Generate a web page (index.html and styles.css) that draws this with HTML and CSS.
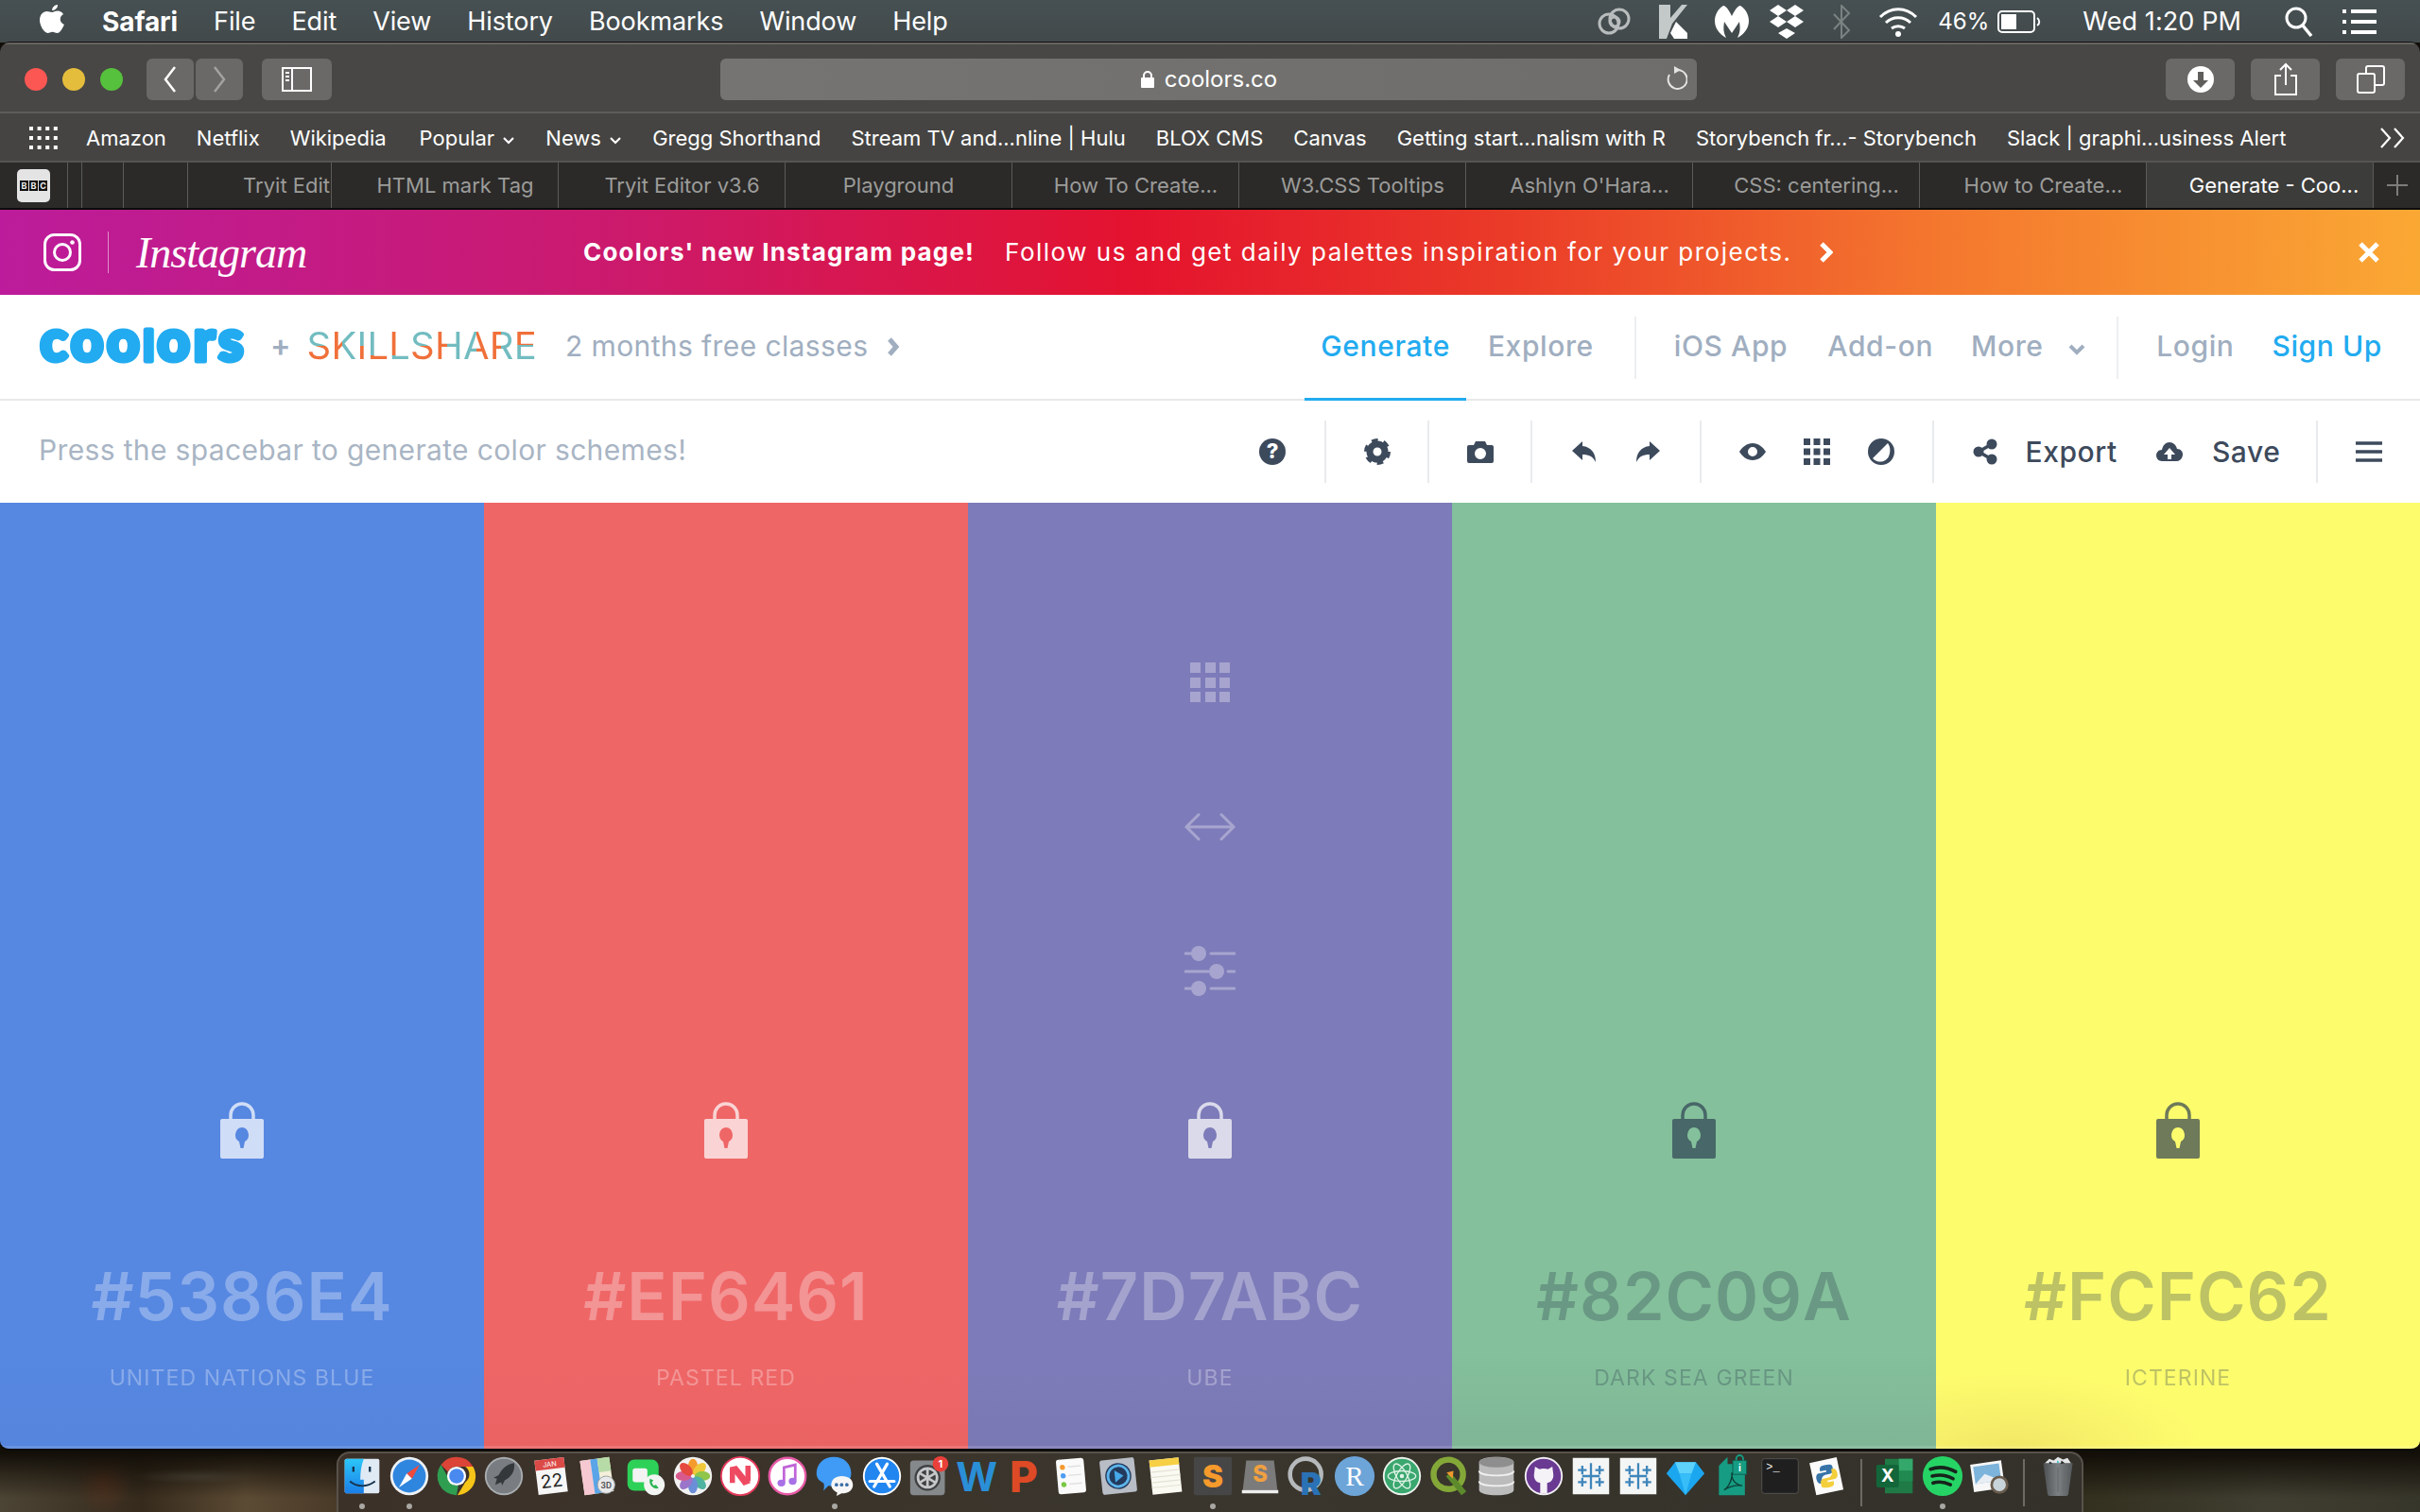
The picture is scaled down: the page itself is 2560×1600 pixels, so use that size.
FILE: index.html
```html
<!DOCTYPE html>
<html lang="en">
<head>
  <meta charset="UTF-8">
  <title>Generate - Coolors</title>
  <link rel="stylesheet" href="styles.css">
</head>
<body>
  <svg class="defs" width="0" height="0">
    <linearGradient id="finderBlue" x1="0" y1="0" x2="0" y2="1"><stop offset="0" stop-color="#2cc6f8"/><stop offset="1" stop-color="#1a7ee8"/></linearGradient>
    <linearGradient id="trashBody" x1="0" y1="0" x2="1" y2="0"><stop offset="0" stop-color="#4c4f51"/><stop offset=".5" stop-color="#7c8083"/><stop offset="1" stop-color="#55585a"/></linearGradient>
    <symbol id="lock" viewBox="0 0 46 60">
      <path d="M11 19V14a12 12 0 0 1 24 0v5" fill="none" stroke="currentColor" stroke-width="3.5"/>
      <path fill-rule="evenodd" fill="currentColor" d="M2 18h42a2 2 0 0 1 2 2v38a2 2 0 0 1-2 2H2a2 2 0 0 1-2-2V20a2 2 0 0 1 2-2zM23 27a7.500 8 0 0 0-3 15l1.500 7h3l1.500-7a7.500 8 0 0 0-3-15z"/>
    </symbol>
    <symbol id="tableau" viewBox="0 0 48 48">
      <rect x="3" y="3" width="42" height="42" fill="#f4f5f5"/>
      <path d="M24 9v30M14 24h20M14 12v10M9 17h10M34 12v10M29 17h10M14 26v10M9 31h10M34 26v10M29 31h10" stroke="#3f86bb" stroke-width="2.500"/>
    </symbol>
  </svg>

  <!-- MENU BAR -->
  <div class="menubar">
    <svg class="apple" viewBox="0 0 28 32"><path fill="#fff" d="M20 1c.300 3-2.600 6.300-5.800 6 -.400-3 2.800-6 5.800-6zM14 9c1.500 0 3-1.400 6-1.400 2.500 0 4.800 1.300 6 3.400-4.800 2.800-4 9 .900 11-1.600 4-4.400 9-7.400 9-1.900 0-2.700-1.300-5-1.300s-3.200 1.300-5 1.300C5.500 31 1 23 1 17.300 1 11.500 4.700 8 8.400 8c2.400 0 4 1 5.600 1z"/></svg>
    <div class="menu-items">
      <span class="menu-app">Safari</span>
      <span>File</span>
      <span>Edit</span>
      <span>View</span>
      <span>History</span>
      <span>Bookmarks</span>
      <span>Window</span>
      <span>Help</span>
    </div>
    <div class="status-items">
      <svg class="st st-cc" viewBox="0 0 40 32"><g fill="none" stroke="#b8bcbc" stroke-width="3"><circle cx="14" cy="18" r="10"/><circle cx="25" cy="13" r="10"/><circle cx="20" cy="16" r="5"/></g></svg>
      <svg class="st st-k" viewBox="0 0 32 36"><path fill="#c3c8c8" d="M0 0h12v14L24 0h6L14 20 8 36H0z"/><path fill="#fff" d="M18 18l12 12v6H16l-4-6z"/></svg>
      <svg class="st st-m" viewBox="0 0 38 36"><path fill="#fff" d="M10 1c3 0 6 5 9 11 3-6 6-11 9-11 5 3 9 9 9 16 0 8-5 14-12 18 3-6 3-10 2-17l-8 12-8-12c-1 7-1 11 2 17C6 31 1 25 1 17 1 10 5 4 10 1z"/></svg>
      <svg class="st st-d" viewBox="0 0 38 36"><path fill="#fff" d="M10 0l9 6-9 6-9-6zM28 0l9 6-9 6-9-6zM10 12l9 6-9 6-9-6zM28 12l9 6-9 6-9-6zM19 25l9 5-9 6-9-6z"/></svg>
      <svg class="st st-b" viewBox="0 0 20 36"><path fill="none" stroke="#7b8282" stroke-width="2" d="M2 10l16 17-8 8V1l8 8L2 26"/></svg>
      <svg class="st st-w" viewBox="0 0 42 32"><g fill="none" stroke="#fff" stroke-width="3"><path d="M2 11c11-11 27-11 38 0"/><path d="M8 17c7-7 19-7 26 0"/><path d="M14 23c4-3 10-3 14 0"/></g><circle cx="21" cy="29" r="3" fill="#fff"/></svg>
      <span class="st-pct">46%</span>
      <svg class="st st-bat" viewBox="0 0 46 24"><rect x="1" y="1" width="38" height="22" rx="4" fill="none" stroke="#fff" stroke-width="2"/><rect x="4" y="4" width="16" height="16" fill="#fff"/><path d="M42 8c3 2 3 6 0 8" fill="none" stroke="#fff" stroke-width="2"/></svg>
      <span class="st-time">Wed 1:20 PM</span>
      <svg class="st st-s" viewBox="0 0 30 32"><circle cx="12" cy="12" r="10" fill="none" stroke="#fff" stroke-width="3"/><path d="M19 20l9 11" stroke="#fff" stroke-width="3.500"/></svg>
      <svg class="st st-l" viewBox="0 0 36 28"><path stroke="#fff" stroke-width="4" d="M0 3h4M9 3h27M0 14h4M9 14h27M0 25h4M9 25h27"/></svg>
    </div>
  </div>

  <div class="window">
    <!-- SAFARI TOOLBAR -->
    <div class="safari-bar">
      <div class="lights">
        <i class="light light-red"></i>
        <i class="light light-yellow"></i>
        <i class="light light-green"></i>
      </div>
      <div class="nav-btns">
        <div class="sbtn sbtn-nav"><svg viewBox="0 0 20 32" width="20" height="32"><path d="M15 3L5 16l10 13" fill="none" stroke="#fff" stroke-width="2.500"/></svg></div>
        <div class="sbtn sbtn-nav"><svg viewBox="0 0 20 32" width="20" height="32"><path d="M5 3l10 13L5 29" fill="none" stroke="#a3a2a0" stroke-width="2.500"/></svg></div>
      </div>
      <div class="sbtn sbtn-side"><svg viewBox="0 0 32 26" width="32" height="26"><rect x="1" y="1" width="30" height="24" fill="none" stroke="#fff" stroke-width="2"/><path d="M11 1v24" stroke="#fff" stroke-width="2"/><path d="M4 6h4M4 10h4M4 14h4" stroke="#fff" stroke-width="2"/></svg></div>
      <div class="url-bar">
        <svg viewBox="0 0 16 20" width="16" height="20"><path d="M4 9V6a4 4 0 0 1 8 0v3" fill="none" stroke="#fff" stroke-width="2"/><rect x="1" y="8" width="14" height="11" rx="1" fill="#fff"/></svg>
        <span>coolors.co</span>
        <svg class="reload" viewBox="0 0 24 26" width="24" height="26"><path d="M14 4a10 10 0 1 1-9 5" fill="none" stroke="#e3e3e2" stroke-width="2"/><path d="M10 0l7 4-7 4z" fill="#e3e3e2"/></svg>
      </div>
      <div class="bar-actions">
        <div class="sbtn sbtn-act"><svg viewBox="0 0 28 28" width="28" height="28"><circle cx="14" cy="14" r="14" fill="#fff"/><path d="M11 6h6v9h5l-8 8-8-8h5z" fill="#5f5e5c"/></svg></div>
        <div class="sbtn sbtn-act"><svg viewBox="0 0 26 36" width="26" height="36"><path d="M8 14H2v20h22V14h-6M13 24V2M7 8l6-6 6 6" fill="none" stroke="#fff" stroke-width="2"/></svg></div>
        <div class="sbtn sbtn-act"><svg viewBox="0 0 30 30" width="30" height="30"><rect x="1" y="9" width="18" height="20" rx="2" fill="none" stroke="#fff" stroke-width="2"/><path d="M10 9V3a2 2 0 0 1 2-2h15a2 2 0 0 1 2 2v16a2 2 0 0 1-2 2h-8" fill="none" stroke="#fff" stroke-width="2"/></svg></div>
      </div>
    </div>

    <!-- BOOKMARKS -->
    <div class="bookmarks">
      <svg class="bm-grid" viewBox="0 0 30 24" width="30" height="24"><path stroke="#fff" stroke-width="4" stroke-dasharray="4 4.600" d="M0 2h30M0 12h30M0 22h30"/></svg>
      <span class="bm bm-amazon">Amazon</span>
      <span class="bm">Netflix</span>
      <span class="bm">Wikipedia</span>
      <span class="bm bm-pop">Popular <svg viewBox="0 0 14 10" width="14" height="10"><path d="M2 2l5 5 5-5" fill="none" stroke="#fff" stroke-width="2.200"/></svg></span>
      <span class="bm">News <svg viewBox="0 0 14 10" width="14" height="10"><path d="M2 2l5 5 5-5" fill="none" stroke="#fff" stroke-width="2.200"/></svg></span>
      <span class="bm">Gregg Shorthand</span>
      <span class="bm">Stream TV and...nline | Hulu</span>
      <span class="bm">BLOX CMS</span>
      <span class="bm">Canvas</span>
      <span class="bm">Getting start...nalism with R</span>
      <span class="bm">Storybench fr...- Storybench</span>
      <span class="bm">Slack | graphi...usiness Alert</span>
      <svg class="bm-more" viewBox="0 0 28 22" width="28" height="22"><path d="M2 1l9 10-9 10M16 1l9 10-9 10" fill="none" stroke="#fff" stroke-width="2.200"/></svg>
    </div>

    <!-- TABS -->
    <div class="tabs">
      <div class="tab tab-pin tab-bbc"><span class="bbc"><b>B</b><b>B</b><b>C</b></span></div>
      <div class="tab tab-pin tab-p1"></div>
      <div class="tab tab-pin tab-p2"></div>
      <div class="tab tab-pin tab-p3"></div>
      <div class="tab tab-cut">Tryit Edit</div>
      <div class="tab tab-long">HTML mark Tag</div>
      <div class="tab tab-long">Tryit Editor v3.6</div>
      <div class="tab">Playground</div>
      <div class="tab tab-long">How To Create...</div>
      <div class="tab tab-long">W3.CSS Tooltips</div>
      <div class="tab tab-long">Ashlyn O'Hara...</div>
      <div class="tab tab-long">CSS: centering...</div>
      <div class="tab tab-long">How to Create...</div>
      <div class="tab tab-active">Generate - Coo...</div>
      <div class="tab-add"><svg viewBox="0 0 24 24" width="24" height="24"><path d="M12 1v22M1 12h22" stroke="#7d7d7b" stroke-width="2"/></svg></div>
    </div>

    <!-- INSTAGRAM BANNER -->
    <div class="banner">
      <svg class="ig-icon" viewBox="0 0 40 40" width="40" height="40"><rect x="1.500" y="1.500" width="37" height="37" rx="10" fill="none" stroke="#fff" stroke-width="3"/><circle cx="20" cy="20" r="8.500" fill="none" stroke="#fff" stroke-width="3"/><circle cx="30.500" cy="9.500" r="2.300" fill="#fff"/></svg>
      <i class="ig-line"></i>
      <span class="ig-word">Instagram</span>
      <b class="banner-strong">Coolors' new Instagram page!</b>
      <span class="banner-text">Follow us and get daily palettes inspiration for your projects.</span>
      <svg class="banner-arrow" viewBox="0 0 16 24" width="16" height="24"><path d="M4 3l9 9-9 9" fill="none" stroke="#fff" stroke-width="5"/></svg>
      <svg class="banner-close" viewBox="0 0 24 24" width="24" height="24"><path d="M3 3l18 18M21 3L3 21" stroke="#fff" stroke-width="5"/></svg>
    </div>

    <!-- COOLORS NAV -->
    <div class="topnav">
      <svg class="brand" viewBox="0 0 220 44" width="220" height="44"><text x="2.500" y="37" textLength="215" class="brand-text">coo<tspan class="brand-l">l</tspan>ors</text></svg>
      <span class="brand-plus">+</span>
      <div class="skill"><span class="sk-v">S</span><span class="sk-l">K</span><span class="sk-v">I</span><span class="sk-fo">L</span><span class="sk-ft">L</span><span class="sk-v">S</span><span class="sk-l">H</span><span class="sk-r">A</span><span class="sk-l">R</span><span class="sk-e">E</span></div>
      <span class="promo">2 months free classes</span>
      <svg class="promo-arrow" viewBox="0 0 14 20" width="14" height="20"><path d="M3 2l7 8-7 8" fill="none" stroke="#a0aec0" stroke-width="5"/></svg>
      <div class="links">
        <a class="link link-on">Generate</a>
        <a class="link">Explore</a>
        <i class="link-sep link-sep-a"></i>
        <a class="link">iOS App</a>
        <a class="link link-wide">Add-on</a>
        <a class="link">More <svg viewBox="0 0 20 14" width="20" height="14"><path d="M3 3l7 7 7-7" fill="none" stroke="#a0aec0" stroke-width="4"/></svg></a>
        <i class="link-sep link-sep-b"></i>
        <a class="link">Login</a>
        <a class="link link-blue">Sign Up</a>
      </div>
    </div>

    <!-- TOOLBAR -->
    <div class="toolbar">
      <span class="hint">Press the spacebar to generate color schemes!</span>
      <div class="tgroup tg-help">
        <svg class="ti" viewBox="0 0 28 28"><circle cx="14" cy="14" r="14" fill="#3d4a5c"/><text x="14" y="21" text-anchor="middle" class="ti-q">?</text></svg>
      </div>
      <div class="tgroup tg-one">
        <svg class="ti" viewBox="0 0 28 28"><circle cx="14" cy="14" r="8" fill="none" stroke="#3d4a5c" stroke-width="7"/><circle cx="14" cy="14" r="12" fill="none" stroke="#3d4a5c" stroke-width="4" stroke-dasharray="6.500 6.070"/></svg>
      </div>
      <div class="tgroup tg-one">
        <svg class="ti" viewBox="0 0 28 28"><path fill-rule="evenodd" fill="#3d4a5c" d="M9 3h10l2 4h5a2 2 0 0 1 2 2v15a2 2 0 0 1-2 2H2a2 2 0 0 1-2-2V9a2 2 0 0 1 2-2h5zM14 10a6 6 0 1 0 0 12 6 6 0 0 0 0-12z"/></svg>
      </div>
      <div class="tgroup tg-hist">
        <svg class="ti" viewBox="0 0 28 28"><path fill="#3d4a5c" d="M12 3L1 13l11 10v-6c7 0 11 2 14 8 0-10-5-16-14-17z"/></svg>
        <svg class="ti" viewBox="0 0 28 28"><path fill="#3d4a5c" d="M16 3l11 10-11 10v-6c-7 0-11 2-14 8 0-10 5-16 14-17z"/></svg>
      </div>
      <div class="tgroup tg-view">
        <svg class="ti" viewBox="0 0 28 28"><path fill-rule="evenodd" fill="#3d4a5c" d="M14 5c6 0 11 4 14 9-3 5-8 9-14 9S3 19 0 14c3-5 8-9 14-9zm0 4a5 5 0 1 0 0 10 5 5 0 0 0 0-10z"/></svg>
        <svg class="ti" viewBox="0 0 28 28"><path fill="#3d4a5c" d="M0 0h7v7H0zM10.500 0h7v7h-7zM21 0h7v7h-7zM0 10.500h7v7H0zM10.500 10.500h7v7h-7zM21 10.500h7v7h-7zM0 21h7v7H0zM10.500 21h7v7h-7zM21 21h7v7h-7z"/></svg>
        <svg class="ti" viewBox="0 0 28 28"><path fill-rule="evenodd" fill="#3d4a5c" d="M14 0a14 14 0 1 1 0 28 14 14 0 0 1 0-28zm7 5L5 21c6 6 14 4 17-2 2-5 2-10-1-14z"/></svg>
      </div>
      <div class="tgroup tg-file">
        <svg class="ti" viewBox="0 0 28 28"><path d="M21 6L7 14l14 8" fill="none" stroke="#3d4a5c" stroke-width="3.500"/><circle cx="21" cy="6" r="5.500" fill="#3d4a5c"/><circle cx="7" cy="14" r="5.500" fill="#3d4a5c"/><circle cx="21" cy="22" r="5.500" fill="#3d4a5c"/></svg>
        <span class="tlabel tl-export">Export</span>
        <svg class="ti" viewBox="0 0 28 28"><path fill-rule="evenodd" fill="#3d4a5c" d="M14 4c4 0 7 3 8 7 4 0 6 3 6 6s-2.500 7-6 7H6c-3.500 0-6-3-6-6s2-6 6-6c1-5 4-8 8-8zm0 6l-6 7h4v5h4v-5h4z"/></svg>
        <span class="tlabel tl-save">Save</span>
      </div>
      <div class="tgroup tg-one">
        <svg class="ti" viewBox="0 0 28 28"><path d="M0 5h28M0 14h28M0 23h28" stroke="#3d4a5c" stroke-width="3.500"/></svg>
      </div>
    </div>

    <!-- PALETTE -->
    <div class="palette">
      <div class="swatch sw-blue">
        <svg class="lock"><use href="#lock"/></svg>
        <div class="hex">#5386E4</div>
        <div class="cname">UNITED NATIONS BLUE</div>
      </div>
      <div class="swatch sw-red">
        <svg class="lock"><use href="#lock"/></svg>
        <div class="hex">#EF6461</div>
        <div class="cname">PASTEL RED</div>
      </div>
      <div class="swatch sw-ube">
        <div class="tools">
          <svg class="tool-grid" viewBox="0 0 42 42"><path fill="#fff" d="M0 0h11v11H0zM16 0h11v11H16zM31 0h11v11H31zM0 16h11v11H0zM16 16h11v11H16zM31 16h11v11H31zM0 31h11v11H0zM16 31h11v11H16zM31 31h11v11H31z"/></svg>
          <svg class="tool-move" viewBox="0 0 56 30"><path d="M3 15h50M16 2L3 15l13 13M40 2l13 13-13 13" fill="none" stroke="#fff" stroke-width="3" stroke-linecap="round"/></svg>
          <svg class="tool-adj" viewBox="0 0 54 54"><path d="M1 8h7M28 8h25M1 27h24M46 27h7M1 45h7M28 45h25" stroke="#fff" stroke-width="3" stroke-linecap="round"/><g fill="#fff"><circle cx="15" cy="8" r="8"/><circle cx="34" cy="27" r="8"/><circle cx="15" cy="45" r="8"/></g></svg>
        </div>
        <svg class="lock"><use href="#lock"/></svg>
        <div class="hex">#7D7ABC</div>
        <div class="cname">UBE</div>
      </div>
      <div class="swatch swatch-dark sw-green">
        <svg class="lock"><use href="#lock"/></svg>
        <div class="hex">#82C09A</div>
        <div class="cname">DARK SEA GREEN</div>
      </div>
      <div class="swatch swatch-dark sw-yellow">
        <svg class="lock"><use href="#lock"/></svg>
        <div class="hex">#FCFC62</div>
        <div class="cname">ICTERINE</div>
      </div>
    </div>
  </div>

  <!-- DOCK -->
  <div class="dock">
    <div class="dk on"><svg viewBox="0 0 48 48"><rect x="4" y="4" width="40" height="40" rx="2" fill="#dfeaf5"/><path d="M4 6a2 2 0 0 1 2-2h20c-3 8-4 15-4 24h4v16H6a2 2 0 0 1-2-2z" fill="url(#finderBlue)"/><path d="M14 13v6M33 13v6" stroke="#16324c" stroke-width="2.500"/><path d="M10 30c8 7 20 7 29 0" fill="none" stroke="#16324c" stroke-width="2"/></svg></div>
    <div class="dk on"><svg viewBox="0 0 48 48"><circle cx="24" cy="24" r="22" fill="#eef2f5"/><circle cx="24" cy="24" r="19" fill="#2f86df"/><path d="M36 11L21 21l6 6z" fill="#f04a3c"/><path d="M12 37l15-10-6-6z" fill="#fff"/></svg></div>
    <div class="dk"><svg viewBox="0 0 48 48"><path d="M24 2a22 22 0 0 1 19 11H24a11 11 0 0 0-10 6L6 11A22 22 0 0 1 24 2z" fill="#db4437"/><path d="M43 13a22 22 0 0 1-18 33l9-15a11 11 0 0 0 0-18z" fill="#f5c518"/><path d="M6 11l9 16a11 11 0 0 0 11 8l-2 11A22 22 0 0 1 6 11z" fill="#2f9e51"/><circle cx="24" cy="24" r="11" fill="#fff"/><circle cx="24" cy="24" r="8.500" fill="#4a8af0"/></svg></div>
    <div class="dk"><svg viewBox="0 0 48 48"><circle cx="24" cy="24" r="22" fill="#a9adb0"/><circle cx="24" cy="24" r="20" fill="#797d81"/><path d="M36 9c-8 1-14 6-18 14l-6 3 4 1-2 7 7-3 1 4 3-6c8-4 12-11 11-20z" fill="#35383b"/></svg></div>
    <div class="dk"><svg viewBox="0 0 48 48"><g transform="rotate(-7 24 24)"><rect x="7" y="4" width="34" height="40" fill="#f6f6f6"/><path d="M7 4h34v12H7z" fill="#dc4a48"/><text x="24" y="13" text-anchor="middle" class="dk-jan">JAN</text><text x="24" y="37" text-anchor="middle" class="dk-day">22</text></g></svg></div>
    <div class="dk"><svg viewBox="0 0 48 48"><g transform="rotate(-8 22 22)"><rect x="5" y="4" width="34" height="40" fill="#f3efd9"/><path d="M5 4h12v40H5z" fill="#f6c8d2"/><path d="M17 4h8v40h-8z" fill="#5aa4e8"/><path d="M25 4h14v16H25z" fill="#b6dba6"/></g><circle cx="33" cy="34" r="10" fill="#e8e9ea" stroke="#9a9c9e"/><text x="33" y="38" text-anchor="middle" class="dk-3d">3D</text></svg></div>
    <div class="dk"><svg viewBox="0 0 48 48"><rect x="3" y="5" width="36" height="36" rx="8" fill="#2ed158"/><rect x="9" y="15" width="17" height="16" rx="3" fill="#f3f3f3"/><circle cx="34" cy="34" r="12" fill="#f2f4f2"/><path d="M29 27c-2 7 4 13 10 11l-3-4-3 1-2-4 2-2z" fill="#2cb552"/></svg></div>
    <div class="dk"><svg viewBox="0 0 48 48"><circle cx="24" cy="24" r="22" fill="#f1f1f1"/><g transform="translate(24 24)"><ellipse cy="-11" rx="5.500" ry="9" fill="#f49b2d"/><ellipse cy="-11" rx="5.500" ry="9" fill="#efc93b" transform="rotate(45)"/><ellipse cy="-11" rx="5.500" ry="9" fill="#8ec54a" transform="rotate(90)"/><ellipse cy="-11" rx="5.500" ry="9" fill="#4fb3a1" transform="rotate(135)"/><ellipse cy="-11" rx="5.500" ry="9" fill="#6b8ed8" transform="rotate(180)"/><ellipse cy="-11" rx="5.500" ry="9" fill="#9a75c9" transform="rotate(225)"/><ellipse cy="-11" rx="5.500" ry="9" fill="#d85a8d" transform="rotate(270)"/><ellipse cy="-11" rx="5.500" ry="9" fill="#e5493f" transform="rotate(315)"/></g></svg></div>
    <div class="dk"><svg viewBox="0 0 48 48"><circle cx="24" cy="24" r="22" fill="#fff" stroke="#e5395a" stroke-width="2"/><path d="M12 14l8-2 16 20-8 3z" fill="#ee4a62"/><path d="M12 14h6v18h-6zM30 12h6v18h-6z" fill="#ee4a62"/></svg></div>
    <div class="dk"><svg viewBox="0 0 48 48"><circle cx="24" cy="24" r="21" fill="#fff" stroke="#e85aa7" stroke-width="2.500"/><path d="M20 31V14l13-3v18" fill="none" stroke="#c165d9" stroke-width="3"/><ellipse cx="17" cy="32" rx="4.500" ry="4" fill="#a870e6"/><ellipse cx="30" cy="30" rx="4.500" ry="4" fill="#a870e6"/></svg></div>
    <div class="dk on"><svg viewBox="0 0 48 48"><path d="M23 2c12 0 20 8 20 19 0 9-8 15-18 15-3 0-6 0-8-1l-6 6c1-4 1-7 0-9C5 29 3 25 3 21 3 10 11 2 23 2z" fill="#3f9bf5"/><path d="M32 24c8 0 13 4 13 10s-5 10-13 10l-6 3 1-4c-4-2-7-5-7-9 0-6 5-10 12-10z" fill="#f6f6f6"/><circle cx="26" cy="34" r="2" fill="#3a6ea8"/><circle cx="32" cy="34" r="2" fill="#3a6ea8"/><circle cx="38" cy="34" r="2" fill="#3a6ea8"/></svg></div>
    <div class="dk"><svg viewBox="0 0 48 48"><circle cx="24" cy="24" r="22" fill="#fff"/><circle cx="24" cy="24" r="20" fill="#2286f1"/><path d="M30 10L15 36M18 10l15 26M10 30h28" stroke="#fff" stroke-width="3.500" stroke-linecap="round"/></svg></div>
    <div class="dk"><svg viewBox="0 0 48 48"><rect x="2" y="6" width="40" height="40" rx="4" fill="#86898c"/><circle cx="22" cy="26" r="15" fill="#3e4042"/><circle cx="22" cy="26" r="11" fill="none" stroke="#c5c7c9" stroke-width="3"/><path d="M22 15v22M12 20l20 12M32 20L12 32" stroke="#c5c7c9" stroke-width="3"/><circle cx="37" cy="10" r="9" fill="#e9403a"/><text x="37" y="14" text-anchor="middle" class="dk-badge">1</text></svg></div>
    <div class="dk"><svg viewBox="0 0 48 48"><text x="24" y="41" text-anchor="middle" class="dk-word">W</text></svg></div>
    <div class="dk"><svg viewBox="0 0 48 48"><text x="24" y="42" text-anchor="middle" class="dk-ppt">P</text></svg></div>
    <div class="dk"><svg viewBox="0 0 48 48"><g transform="rotate(-5 24 24)"><rect x="8" y="4" width="32" height="40" rx="3" fill="#fafafa"/><circle cx="15" cy="13" r="3" fill="#f59a2f"/><circle cx="15" cy="23" r="3" fill="#4e9df2"/><circle cx="15" cy="33" r="3" fill="#79c944"/><path d="M21 13h15M21 23h15M21 33h15" stroke="#e0e0e0" stroke-width="1.500"/></g></svg></div>
    <div class="dk"><svg viewBox="0 0 48 48"><g transform="rotate(-6 24 24)"><rect x="4" y="4" width="40" height="40" rx="3" fill="#b8bdc6"/><circle cx="24" cy="24" r="15" fill="#233a5c"/><circle cx="24" cy="24" r="12" fill="none" stroke="#5db4ea" stroke-width="3"/><path d="M20 17l10 7-10 7z" fill="#45a8ea"/></g></svg></div>
    <div class="dk"><svg viewBox="0 0 48 48"><g transform="rotate(-6 24 24)"><rect x="7" y="4" width="34" height="40" fill="#fafaf2"/><path d="M7 4h34v8H7z" fill="#f6cf45"/><path d="M7 18h34M7 24h34M7 30h34M7 36h34" stroke="#e4e2d4" stroke-width="1.200"/></g></svg></div>
    <div class="dk on"><svg viewBox="0 0 48 48"><rect x="2" y="2" width="44" height="44" rx="2" fill="#464646"/><text x="24" y="37" text-anchor="middle" class="dk-subl">S</text></svg></div>
    <div class="dk"><svg viewBox="0 0 48 48"><path d="M8 6h32l4 34H4z" fill="#7b7b7b"/><path d="M3 40h42v4H3z" fill="#eee"/><text x="24" y="31" text-anchor="middle" class="dk-merge">S</text></svg></div>
    <div class="dk"><svg viewBox="0 0 48 48"><circle cx="22" cy="22" r="18" fill="none" stroke="#b6b9bc" stroke-width="5"/><text x="28" y="46" text-anchor="middle" class="dk-rs">R</text></svg></div>
    <div class="dk"><svg viewBox="0 0 48 48"><ellipse cx="24" cy="24" rx="23" ry="23" fill="#6da5d9"/><text x="24" y="35" text-anchor="middle" class="dk-r">R</text></svg></div>
    <div class="dk"><svg viewBox="0 0 48 48"><circle cx="24" cy="24" r="22" fill="#eef3ee"/><circle cx="24" cy="24" r="20" fill="#3aa76f"/><g fill="none" stroke="#dff3e6" stroke-width="1.500"><ellipse cx="24" cy="24" rx="16" ry="6"/><ellipse cx="24" cy="24" rx="16" ry="6" transform="rotate(60 24 24)"/><ellipse cx="24" cy="24" rx="16" ry="6" transform="rotate(120 24 24)"/></g><circle cx="24" cy="24" r="2.500" fill="#dff3e6"/></svg></div>
    <div class="dk"><svg viewBox="0 0 48 48"><circle cx="23" cy="22" r="17" fill="none" stroke="#84a838" stroke-width="7"/><path d="M23 22l18 22" stroke="#5d8a2c" stroke-width="7"/><path d="M21 20l8-2-1 9z" fill="#ef9a2c"/></svg></div>
    <div class="dk"><svg viewBox="0 0 48 48"><path d="M4 8c0-8 40-8 40 0v32c0 8-40 8-40 0z" fill="#bcbcbc"/><ellipse cx="24" cy="8" rx="20" ry="6" fill="#8e8e8e"/><path d="M4 18c0 7 40 7 40 0M4 30c0 7 40 7 40 0" fill="none" stroke="#f0f0f0" stroke-width="2"/></svg></div>
    <div class="dk"><svg viewBox="0 0 48 48"><circle cx="24" cy="24" r="22" fill="#f2eff5"/><circle cx="24" cy="24" r="20" fill="#6a3a92"/><path d="M14 13l5 3c3-1 7-1 10 0l5-3 1 8c1 6-2 10-7 11v12h-8V32c-5-1-8-5-7-11z" fill="#f4f1f7"/></svg></div>
    <div class="dk"><svg viewBox="0 0 48 48"><use href="#tableau"/></svg></div>
    <div class="dk"><svg viewBox="0 0 48 48"><use href="#tableau"/></svg></div>
    <div class="dk"><svg viewBox="0 0 48 48"><path d="M12 8h24l10 13-22 25L2 21z" fill="#1ba7f0"/><path d="M12 8h24l-5 13H17z" fill="#5ed2fb"/><path d="M17 21h14l-7 25z" fill="#37bdf8"/></svg></div>
    <div class="dk"><svg viewBox="0 0 48 48"><path d="M8 12L18 2v8h20v36H8z" fill="#169c82"/><rect x="24" y="6" width="16" height="16" fill="#169c82" stroke="#0f5c4f"/><path d="M28 6V4a4 4 0 0 1 8 0v2" fill="none" stroke="#169c82" stroke-width="2"/><text x="32" y="18" text-anchor="middle" class="dk-i">i</text><path d="M14 40c6-4 10-14 9-20-1 8 4 14 12 15-8-1-15 1-21 5z" fill="none" stroke="#0e3f38" stroke-width="1.500"/></svg></div>
    <div class="dk"><svg viewBox="0 0 48 48"><rect x="3" y="4" width="42" height="40" rx="3" fill="#1f1f1f" stroke="#555"/><text x="8" y="17" class="dk-term">&gt;_</text></svg></div>
    <div class="dk"><svg viewBox="0 0 48 48"><g transform="rotate(-12 24 24)"><rect x="7" y="5" width="32" height="38" fill="#fbfbfb"/><path d="M23 11c-6 0-6 3-6 6h7v2h-9c-3 0-4 3-4 6 0 3 1 6 4 6h2v-4c0-3 3-5 6-5h5c2 0 4-2 4-4v-4c0-2-3-3-9-3z" fill="#3874a8"/><path d="M24 37c6 0 6-3 6-6h-7v-2h9c3 0 4-3 4-6s-1-6-4-6h-2v4c0 3-3 5-6 5h-5c-2 0-4 2-4 4v4c0 2 3 3 9 3z" fill="#f4cf3c"/></g></svg></div>
    <i class="dk-sep"></i>
    <div class="dk"><svg viewBox="0 0 48 48"><path d="M12 4h32v40H12z" fill="#1f7a45"/><path d="M28 4h16v14H28z" fill="#34a86a"/><path d="M28 18h16v12H28z" fill="#218a50"/><rect x="2" y="11" width="26" height="26" rx="2" fill="#13663a"/><text x="15" y="31" text-anchor="middle" class="dk-x">X</text></svg></div>
    <div class="dk on"><svg viewBox="0 0 48 48"><circle cx="24" cy="24" r="23" fill="#26d465"/><path d="M10 16c9-3 20-2 29 3M12 24c8-2 17-1 24 3M13 32c6-2 14-1 20 2" fill="none" stroke="#17241c" stroke-width="4" stroke-linecap="round"/></svg></div>
    <div class="dk"><svg viewBox="0 0 48 48"><g transform="rotate(-8 22 22)"><rect x="3" y="8" width="36" height="32" fill="#f7f7f7"/><rect x="6" y="11" width="30" height="20" fill="#7db4dc"/><path d="M6 31l12-10 18 10z" fill="#e8eef3"/></g><circle cx="35" cy="34" r="9" fill="#c9d3da" stroke="#6b5d4e" stroke-width="3"/></svg></div>
    <i class="dk-sep"></i>
    <div class="dk"><svg viewBox="0 0 48 48"><path d="M7 9h34l-5 36a3 3 0 0 1-3 2H15a3 3 0 0 1-3-2z" fill="url(#trashBody)"/><path d="M16 14l2 28M24 14v28M32 14l-2 28" stroke="#6a6d6f" stroke-width="1.500"/><path d="M9 9l5-5 5 2 5-4 6 3 5-2 4 6z" fill="#e4e6e8"/><path d="M14 7l4 2-4 1zM28 6l4 3-5 1z" fill="#2b2d30"/><path d="M23 6l3 2-3 1z" fill="#38c4d0"/></svg></div>
  </div>
</body>
</html>
```

FILE: styles.css
```css
body {
  margin: 0;
  width: 2560px;
  height: 1600px;
  overflow: hidden;
  display: flex;
  flex-direction: column;
  background:
    linear-gradient(#120e08 1537px, rgba(18, 14, 8, 0) 1585px),
    radial-gradient(ellipse 30px 40px at 110px 1565px, rgba(90, 50, 30, .7), transparent),
    radial-gradient(ellipse 70px 8px at 210px 1562px, rgba(110, 105, 90, .6), transparent),
    linear-gradient(90deg, #4c4434 0, #352a1c 150px, #5c4b34 260px, #493a28 358px, #33301f 2204px, #3f3e30 2400px, #37362a 2560px);
  font-family: 'Inter', 'Liberation Sans', sans-serif;
}

.defs {
  position: absolute;
}

/* menu bar */
.menubar {
  height: 45px;
  flex-shrink: 0;
  display: flex;
  align-items: center;
  background: linear-gradient(#465052, #42494b);
  color: #fff;
  font-size: 27px;
  box-sizing: border-box;
}

.apple {
  width: 28px;
  height: 32px;
  margin-left: 41px;
  margin-top: -6px;
}

.menu-items {
  display: flex;
  gap: 38px;
  margin-left: 39px;
  letter-spacing: -0.1px;
}

.menu-app {
  font-weight: 700;
  font-size: 28px;
}

.status-items {
  margin-left: auto;
  display: flex;
  align-items: center;
  height: 100%;
}

.st {
  flex-shrink: 0;
}

.st-cc { width: 40px; height: 32px; margin-right: 27px; }
.st-k { width: 32px; height: 36px; margin-right: 26px; }
.st-m { width: 38px; height: 36px; margin-right: 20px; }
.st-d { width: 38px; height: 36px; margin-right: 29px; }
.st-b { width: 20px; height: 36px; margin-right: 29px; }
.st-w { width: 42px; height: 32px; margin-right: 21px; }
.st-pct { font-size: 24px; margin-right: 9px; }
.st-bat { width: 46px; height: 24px; margin-right: 44px; }
.st-time { font-size: 27px; margin-right: 46px; letter-spacing: 0.1px; }
.st-s { width: 30px; height: 32px; margin-right: 31px; }
.st-l { width: 36px; height: 28px; margin-right: 46px; }

/* safari */
.window {
  height: 1490px;
  flex-shrink: 0;
  display: flex;
  flex-direction: column;
  overflow: hidden;
  border-radius: 10px;
  border-bottom: 2px solid #0b0b0b;
  box-sizing: border-box;
  box-shadow: 0 -1px 0 #111;
}

.safari-bar {
  height: 75px;
  flex-shrink: 0;
  display: flex;
  align-items: center;
  background: #484745;
  border-top: 2px solid #66645f;
  border-bottom: 2px solid #5d5c5a;
  padding-top: 2px;
  box-sizing: border-box;
}

.lights {
  display: flex;
  gap: 16px;
  margin-left: 26px;
}

.light {
  width: 24px;
  height: 24px;
  border-radius: 50%;
}

.light-red { background: #fc5753; }
.light-yellow { background: #e5bd3c; }
.light-green { background: #56c13c; }

.sbtn {
  height: 44px;
  background: #6a6967;
  border-radius: 6px;
  display: flex;
  align-items: center;
  justify-content: center;
}

.nav-btns {
  display: flex;
  gap: 2px;
  margin-left: 25px;
}

.sbtn-nav { width: 50px; }
.sbtn-side { width: 74px; margin-left: 20px; }

.url-bar {
  position: relative;
  width: 1033px;
  height: 44px;
  margin-left: 411px;
  border-radius: 6px;
  background: linear-gradient(90deg, #757472, #6e6d6b);
  display: flex;
  align-items: center;
  justify-content: center;
  gap: 10px;
  color: #fff;
  font-size: 24px;
}

.reload {
  position: absolute;
  right: 10px;
  top: 8px;
}

.bar-actions {
  display: flex;
  gap: 17px;
  margin-left: auto;
  margin-right: 16px;
}

.sbtn-act { width: 73px; }

/* bookmarks */
.bookmarks {
  height: 48px;
  padding-top: 2px;
  flex-shrink: 0;
  display: flex;
  align-items: center;
  gap: 32px;
  background: #454442;
  border-bottom: 2px solid #555452;
  color: #fff;
  font-size: 22px;
  white-space: nowrap;
}

.bm-grid {
  margin-left: 31px;
  flex-shrink: 0;
}

.bm {
  flex-shrink: 0;
}

.bm svg {
  margin-left: 2px;
}

.bm-amazon { margin-left: -2px; }
.bm-pop { margin-left: 3px; }

.bm-more {
  margin-left: auto;
  margin-right: 15px;
}

/* tabs */
.tabs {
  height: 48px;
  flex-shrink: 0;
  display: flex;
  background: #2b2a29;
  border-bottom: 2px solid #0c0c0c;
  color: #9c9c9a;
  font-size: 22px;
  white-space: nowrap;
}

.tab {
  width: 240px;
  flex-shrink: 0;
  box-sizing: border-box;
  border-right: 1px solid #5b5b59;
  display: flex;
  align-items: center;
  justify-content: center;
  overflow: hidden;
}

.tab-long { padding-left: 22px; }
.tab-pin { justify-content: flex-start; }
.tab-bbc { width: 72px; padding-left: 18px; }
.tab-p1 { width: 15px; }
.tab-p2 { width: 44px; }
.tab-p3 { width: 68px; }

.tab-cut {
  width: 152px;
  justify-content: flex-end;
  padding-right: 1px;
}

.tab-active {
  padding-left: 30px;
  background: #3c3c3a;
  color: #fff;
}

.tab-add {
  flex: 1;
  display: flex;
  align-items: center;
  justify-content: center;
}

.bbc {
  width: 35px;
  height: 35px;
  background: #e4e4e4;
  border-radius: 5px;
  display: flex;
  align-items: center;
  justify-content: center;
  gap: 1px;
}

.bbc b {
  width: 9px;
  height: 11px;
  background: #111;
  color: #eee;
  font-size: 9px;
  line-height: 11px;
  text-align: center;
}

/* instagram */
.banner {
  height: 90px;
  flex-shrink: 0;
  display: flex;
  align-items: center;
  background: linear-gradient(90deg, #bc1c9b 0, #cb1a6e 25%, #e4132e 47%, #ea3a28 62%, #f4772e 80%, #faa834 100%);
  color: #fff;
  font-size: 26px;
  white-space: nowrap;
}

.ig-icon {
  margin-left: 46px;
  flex-shrink: 0;
}

.ig-line {
  width: 1px;
  height: 44px;
  margin-left: 28px;
  background: rgba(255, 255, 255, .5);
}

.ig-word {
  margin-left: 29px;
  width: 180px;
  font-family: 'Liberation Serif', serif;
  font-style: italic;
  font-size: 46px;
  letter-spacing: -1px;
}

.banner-strong {
  margin-left: 293px;
  margin-bottom: 2px;
  font-weight: 700;
  letter-spacing: 1.2px;
}

.banner-text {
  margin-left: 32px;
  margin-bottom: 2px;
  letter-spacing: 1.5px;
}

.banner-arrow {
  margin-left: 28px;
}

.banner-close {
  margin-left: auto;
  margin-right: 42px;
}

/* coolors nav */
.topnav {
  height: 112px;
  flex-shrink: 0;
  display: flex;
  align-items: center;
  background: #fff;
  border-bottom: 2px solid #e9e9e9;
  box-sizing: border-box;
  padding-left: 40px;
}

.brand {
  flex-shrink: 0;
  overflow: visible;
}

.brand-text {
  font-family: 'Lato', 'Inter', sans-serif;
  font-weight: 900;
  font-size: 60px;
  fill: #22abf0;
  stroke: #22abf0;
  stroke-width: 5px;
  stroke-linejoin: round;
}

.brand-l {
  font-size: 44px;
}

.brand-plus {
  margin-left: 26px;
  margin-bottom: 3px;
  color: #a0aec0;
  font-size: 32px;
  font-weight: 600;
}

.skill {
  margin-left: 17px;
  margin-bottom: 3px;
  font-size: 40px;
  letter-spacing: 0.2px;
}

.skill span {
  display: inline-block;
  -webkit-background-clip: text;
  background-clip: text;
  color: transparent;
}

.sk-v { background-image: linear-gradient(#72bcc0 52%, #f0703a 52%); }
.sk-l { background-image: linear-gradient(90deg, #f0703a 45%, #72bcc0 45%); }
.sk-r { background-image: linear-gradient(90deg, #72bcc0 50%, #f0703a 50%); }
.sk-fo { background-image: linear-gradient(#72bcc0 72%, #f0703a 72%); }
.sk-ft { background-image: linear-gradient(#f0703a 72%, #72bcc0 72%); }
.sk-e { background-image: linear-gradient(#f0703a 50%, #72bcc0 50%); }

.promo {
  margin-left: 30px;
  margin-bottom: 2px;
  color: #a0aec0;
  font-size: 30px;
  letter-spacing: 0.4px;
}

.promo-arrow {
  margin-left: 20px;
}

.links {
  margin-left: auto;
  display: flex;
  align-items: center;
  align-self: stretch;
  padding-right: 40px;
  margin-bottom: -2px;
  font-size: 30px;
  font-weight: 500;
  letter-spacing: 0.6px;
  color: #a0aec0;
}

.link {
  margin-left: 40px;
  margin-bottom: 5px;
  white-space: nowrap;
}

.link-wide {
  margin-left: 42px;
}

.link svg {
  margin-left: 17px;
}

.link-on {
  align-self: stretch;
  display: flex;
  align-items: center;
  padding: 0 17px 2px;
  margin: 0 -17px 0 0;
  color: #22abf0;
  border-bottom: 3px solid #22abf0;
  box-sizing: border-box;
}

.link-blue {
  color: #22abf0;
}

.link-sep {
  width: 2px;
  height: 66px;
  background: #eceff2;
}

.link-sep-a { margin-left: 43px; }
.link-sep-b { margin-left: 32px; }

/* toolbar */
.toolbar {
  height: 108px;
  flex-shrink: 0;
  display: flex;
  align-items: center;
  background: #fff;
  padding: 0 1px 0 41px;
}

.hint {
  margin-right: auto;
  margin-bottom: 5px;
  color: #a9b5c4;
  font-size: 30px;
  letter-spacing: 0.35px;
}

.tgroup {
  height: 66px;
  box-sizing: border-box;
  display: flex;
  align-items: center;
  justify-content: center;
  border-left: 2px solid #e8ebee;
}

.tg-help { width: 110px; border-left: 0; }
.tg-one { width: 109px; }
.tg-hist { width: 179px; gap: 39px; }
.tg-view { width: 246px; gap: 40px; }
.tg-file { width: 406px; padding-left: 3px; }

.ti {
  width: 28px;
  height: 28px;
  flex-shrink: 0;
}

.ti-q {
  font-size: 22px;
  font-weight: 800;
  fill: #fff;
}

.tlabel {
  color: #3d4a5c;
  font-size: 30px;
  font-weight: 500;
  letter-spacing: 0.6px;
}

.tl-export { margin-left: 28px; margin-right: 41px; }
.tl-save { margin-left: 31px; }

/* palette */
.palette {
  flex: 1;
  display: flex;
  min-height: 0;
}

.swatch {
  flex: 1;
  display: flex;
  flex-direction: column;
  align-items: center;
  justify-content: flex-end;
  padding-bottom: 63px;
  color: #fff;
  box-shadow: inset 0 -3px 0 rgba(255, 255, 255, .12);
}

.swatch-dark {
  color: #2c3e50;
}

.sw-blue { background: linear-gradient(#5687e1 90%, #5585dc); }
.sw-red { background: linear-gradient(#ef6667 90%, #ea6363); }
.sw-ube { background: linear-gradient(#7d7bb9 90%, #7a78b3); }
.sw-green { background: linear-gradient(#84c09b 90%, #7fb696); }
.sw-yellow { background: radial-gradient(ellipse 200px 80px at 80px 100%, #f2e767, transparent), #fdfc6d; }

.lock {
  width: 46px;
  height: 60px;
  opacity: .72;
}

.swatch-dark .lock {
  opacity: .68;
}

.hex {
  margin-top: 111px;
  font-size: 70px;
  line-height: 70px;
  font-weight: 600;
  letter-spacing: 1px;
  opacity: .3;
}

.cname {
  margin-top: 39px;
  font-size: 23px;
  line-height: 24px;
  letter-spacing: 1.1px;
  opacity: .3;
}

.tools {
  display: flex;
  flex-direction: column;
  align-items: center;
  margin-bottom: 111px;
  opacity: .32;
}

.tool-grid { width: 42px; height: 42px; }
.tool-move { width: 56px; height: 30px; margin-top: 117px; }
.tool-adj { width: 54px; height: 54px; margin-top: 111px; }

/* dock */
.dock {
  flex: 1;
  margin-left: 356px;
  width: 1848px;
  margin-top: 1px;
  display: flex;
  background: linear-gradient(90deg, #3c3128, #3a362d 50%, #33312a);
  border: 2px solid #57524a;
  border-bottom: 0;
  border-radius: 14px 14px 0 0;
  padding-top: 2px;
  box-sizing: border-box;
}

.dk {
  position: relative;
  width: 50px;
  flex-shrink: 0;
  display: flex;
  justify-content: center;
}

.dk svg {
  width: 44px;
  height: 44px;
  overflow: visible;
}

.dk.on::after {
  content: "";
  position: absolute;
  left: 22px;
  top: 51px;
  width: 6px;
  height: 6px;
  border-radius: 50%;
  background: #a9a7a2;
}

.dk-sep {
  width: 2px;
  height: 50px;
  margin: 4px 10px 0;
  background: #6d6a63;
  flex-shrink: 0;
}

.dk-jan { font-size: 8px; fill: #fff; }
.dk-day { font-size: 21px; fill: #222; }
.dk-3d { font-size: 9px; fill: #555; font-weight: 700; }
.dk-badge { font-size: 12px; fill: #fff; font-weight: 700; }
.dk-word { font-size: 46px; font-weight: 700; fill: #2a8fd6; }
.dk-ppt { font-size: 50px; font-weight: 800; fill: #dd4a25; }
.dk-subl { font-size: 36px; font-weight: 900; fill: #f79a2c; }
.dk-merge { font-size: 26px; font-weight: 800; fill: #f0a040; }
.dk-rs { font-size: 36px; font-weight: 900; fill: #2a72b5; }
.dk-r { font-size: 32px; fill: #fff; font-family: 'Liberation Serif', serif; }
.dk-i { font-size: 11px; fill: #fff; font-weight: 700; }
.dk-term { font-size: 13px; fill: #eee; font-family: 'Liberation Mono', monospace; }
.dk-x { font-size: 20px; font-weight: 700; fill: #fff; }
```
